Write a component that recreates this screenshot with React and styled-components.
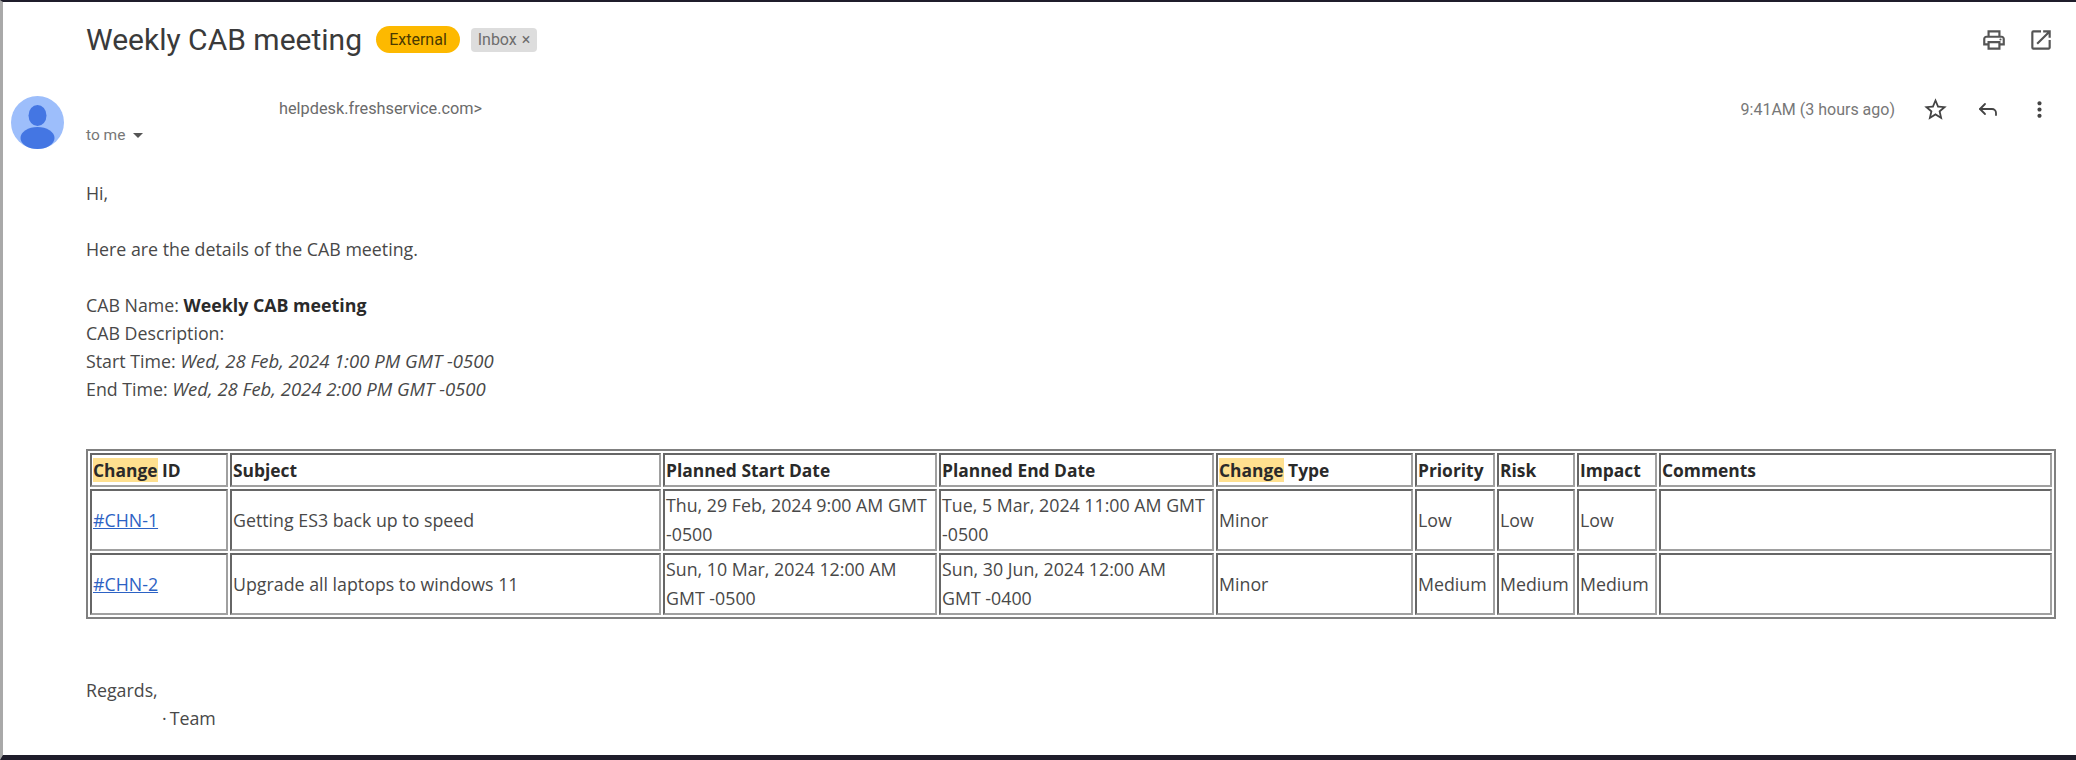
import styled, { createGlobalStyle } from "styled-components";
import { MdOutlinePrint, MdOpenInNew, MdStarBorder, MdMoreVert, MdArrowDropDown } from "react-icons/md";
import { Reply } from "lucide-react";

const GlobalStyle = createGlobalStyle`
  html, body {
    margin: 0;
    padding: 0;
    background: #fff;
  }
`;

const columns = [138, 431, 274, 275, 197, 80, 78, 80, 393];

const headers = [
  { mark: "Change", rest: " ID" },
  { rest: "Subject" },
  { rest: "Planned Start Date" },
  { rest: "Planned End Date" },
  { mark: "Change", rest: " Type" },
  { rest: "Priority" },
  { rest: "Risk" },
  { rest: "Impact" },
  { rest: "Comments" },
];

const rows = [
  {
    id: "#CHN-1",
    subject: "Getting ES3 back up to speed",
    start: "Thu, 29 Feb, 2024 9:00 AM GMT -0500",
    end: "Tue, 5 Mar, 2024 11:00 AM GMT -0500",
    type: "Minor",
    priority: "Low",
    risk: "Low",
    impact: "Low",
  },
  {
    id: "#CHN-2",
    subject: "Upgrade all laptops to windows 11",
    start: "Sun, 10 Mar, 2024 12:00 AM GMT -0500",
    end: "Sun, 30 Jun, 2024 12:00 AM GMT -0400",
    type: "Minor",
    priority: "Medium",
    risk: "Medium",
    impact: "Medium",
  },
];

const Avatar = () => (
  <svg width="53" height="53" viewBox="0 0 53 53">
    <circle cx="26.5" cy="26.5" r="26.5" fill="#9dbefb" />
    <ellipse cx="26.5" cy="19.5" rx="9" ry="10.5" fill="#4476e3" />
    <ellipse cx="26.5" cy="42" rx="17" ry="11" fill="#4476e3" />
  </svg>
);

export default function App() {
  return (
    <>
      <GlobalStyle />
      <Page>
        <Subject>
          <Title>Weekly CAB meeting</Title>
          <ExternalTag>External</ExternalTag>
          <InboxTag>
            Inbox <span>×</span>
          </InboxTag>
          <TopActions>
            <MdOutlinePrint size={26} />
            <MdOpenInNew size={26} />
          </TopActions>
        </Subject>

        <Sender>
          <Avatar />
          <SenderInfo>
            <Address>helpdesk.freshservice.com&gt;</Address>
            <ToMe>
              to me <MdArrowDropDown size={24} />
            </ToMe>
          </SenderInfo>
          <Meta>
            <Time>9:41AM (3 hours ago)</Time>
            <MetaIcons>
              <MdStarBorder size={27} />
              <Reply size={24} strokeWidth={1.8} />
              <MdMoreVert size={25} />
            </MetaIcons>
          </Meta>
        </Sender>

        <Body>
          <Line>Hi,</Line>
          <Spacer />
          <Line>Here are the details of the CAB meeting.</Line>
          <Spacer />
          <Line>
            CAB Name: <strong>Weekly CAB meeting</strong>
          </Line>
          <Line>CAB Description:</Line>
          <Line>
            Start Time: <em>Wed, 28 Feb, 2024 1:00 PM GMT -0500</em>
          </Line>
          <Line>
            End Time: <em>Wed, 28 Feb, 2024 2:00 PM GMT -0500</em>
          </Line>

          <ChangeTable>
            <colgroup>
              {columns.map((w, i) => (
                <col key={i} style={{ width: w }} />
              ))}
            </colgroup>
            <thead>
              <tr>
                {headers.map((h, i) => (
                  <HeadCell key={i}>
                    {h.mark && <Mark>{h.mark}</Mark>}
                    {h.rest}
                  </HeadCell>
                ))}
              </tr>
            </thead>
            <tbody>
              {rows.map((r) => (
                <tr key={r.id}>
                  <Cell>
                    <ChangeLink href="#">{r.id}</ChangeLink>
                  </Cell>
                  <Cell>{r.subject}</Cell>
                  <Cell $date>{r.start}</Cell>
                  <Cell $date>{r.end}</Cell>
                  <Cell>{r.type}</Cell>
                  <Cell>{r.priority}</Cell>
                  <Cell>{r.risk}</Cell>
                  <Cell>{r.impact}</Cell>
                  <Cell />
                </tr>
              ))}
            </tbody>
          </ChangeTable>

          <Regards>
            <Line>Regards,</Line>
            <TeamLine>·{"\u2009"}Team</TeamLine>
          </Regards>
        </Body>
      </Page>
    </>
  );
}

const Page = styled.div`
  box-sizing: border-box;
  width: 2076px;
  height: 760px;
  overflow: hidden;
  background: #fff;
  border-top: 2px solid #1f1d2b;
  border-bottom: 5px solid #1f1d2b;
  border-left: 3px solid #a9a9a9;
  font-family: "Open Sans", "Noto Sans", sans-serif;
  color: #484848;
`;

const Subject = styled.div`
  display: flex;
  align-items: center;
  height: 75px;
  padding: 0 22px 0 83px;
`;

const Title = styled.h1`
  margin: 0 14px 0 0;
  font-family: Roboto, "Liberation Sans", sans-serif;
  font-size: 30px;
  font-weight: 400;
  color: #3a3a3a;
`;

const ExternalTag = styled.span`
  display: flex;
  align-items: center;
  justify-content: center;
  width: 84px;
  height: 27px;
  margin-right: 11px;
  border-radius: 14px;
  background: #fdb900;
  font-family: Roboto, "Liberation Sans", sans-serif;
  font-size: 16px;
  color: #4a3a00;
`;

const InboxTag = styled.span`
  display: flex;
  align-items: center;
  justify-content: center;
  gap: 5px;
  width: 66px;
  height: 24px;
  border-radius: 4px;
  background: #dddddd;
  font-family: Roboto, "Liberation Sans", sans-serif;
  font-size: 16px;
  color: #6d6d6d;
`;

const TopActions = styled.div`
  display: flex;
  align-items: center;
  gap: 21px;
  margin-left: auto;
  color: #555;
`;

const Sender = styled.div`
  display: flex;
  align-items: flex-start;
  height: 83px;
  padding: 19px 24px 0 8px;
`;

const SenderInfo = styled.div`
  display: flex;
  flex-direction: column;
  margin-left: 22px;
  font-family: Roboto, "Liberation Sans", sans-serif;
`;

const Address = styled.div`
  padding-left: 193px;
  font-size: 16.3px;
  line-height: 26px;
  color: #6b6b6b;
`;

const ToMe = styled.div`
  display: flex;
  align-items: center;
  gap: 1px;
  height: 26px;
  font-size: 15.5px;
  color: #777;

  svg {
    color: #555;
  }
`;

const Meta = styled.div`
  display: flex;
  align-items: center;
  height: 26px;
  margin-left: auto;
  font-family: Roboto, "Liberation Sans", sans-serif;
`;

const Time = styled.span`
  font-size: 16px;
  color: #777;
`;

const MetaIcons = styled.div`
  display: flex;
  align-items: center;
  gap: 27px;
  margin-left: 27px;
  color: #444;
`;

const Body = styled.div`
  padding-left: 83px;
  font-size: 17.8px;
`;

const Line = styled.div`
  height: 28px;
  line-height: 28px;
  white-space: nowrap;

  strong {
    font-weight: 700;
    color: #2a2a2a;
  }

  em {
    font-size: 18.5px;
  }
`;

const Spacer = styled.div`
  height: 28px;
`;

const ChangeTable = styled.table`
  box-sizing: border-box;
  table-layout: fixed;
  width: 1970px;
  margin-top: 46px;
  border-collapse: separate;
  border-spacing: 2px;
  border: 2px solid #808080;
`;

const HeadCell = styled.th`
  box-sizing: border-box;
  height: 34px;
  padding: 0 1px;
  border: 2px solid #777;
  border-color: #666 #a0a0a0 #a0a0a0 #666;
  text-align: left;
  font-size: 17.4px;
  font-weight: 700;
  line-height: 30px;
  color: #2a2a2a;
  white-space: nowrap;
`;

const Mark = styled.span`
  background: #ffe08f;
`;

const Cell = styled.td`
  box-sizing: border-box;
  height: 62px;
  padding: 0 ${(p) => (p.$date ? "4px" : "1px")} 0 1px;
  border: 2px solid #777;
  border-color: #666 #a0a0a0 #a0a0a0 #666;
  font-size: 17.8px;
  line-height: 29px;
  color: #484848;
`;

const ChangeLink = styled.a`
  color: #2c62c4;
`;

const Regards = styled.div`
  margin-top: 57px;
`;

const TeamLine = styled(Line)`
  padding-left: 76px;
`;
